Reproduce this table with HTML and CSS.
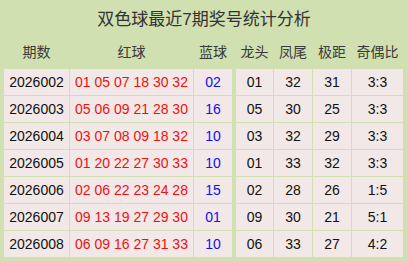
FILE: index.html
```html
<!DOCTYPE html>
<html lang="zh">
<head>
<meta charset="utf-8">
<title>双色球最近7期奖号统计分析</title>
<link rel="stylesheet" href="styles.css">
</head>
<body>
<div class="wrap">
  <div class="title">双色球最近7期奖号统计分析</div>
  <div class="grid head">
    <div>期数</div><div>红球</div><div>蓝球</div><div class="sep">龙头</div><div>凤尾</div><div>极距</div><div>奇偶比</div>
  </div>
  <div class="grid body">
    <div class="c">2026002</div><div class="c red">01 05 07 18 30 32</div><div class="c blue">02</div><div class="c sep">01</div><div class="c">32</div><div class="c">31</div><div class="c">3:3</div>
    <div class="c">2026003</div><div class="c red">05 06 09 21 28 30</div><div class="c blue">16</div><div class="c sep">05</div><div class="c">30</div><div class="c">25</div><div class="c">3:3</div>
    <div class="c">2026004</div><div class="c red">03 07 08 09 18 32</div><div class="c blue">10</div><div class="c sep">03</div><div class="c">32</div><div class="c">29</div><div class="c">3:3</div>
    <div class="c">2026005</div><div class="c red">01 20 22 27 30 33</div><div class="c blue">10</div><div class="c sep">01</div><div class="c">33</div><div class="c">32</div><div class="c">3:3</div>
    <div class="c">2026006</div><div class="c red">02 06 22 23 24 28</div><div class="c blue">15</div><div class="c sep">02</div><div class="c">28</div><div class="c">26</div><div class="c">1:5</div>
    <div class="c">2026007</div><div class="c red">09 13 19 27 29 30</div><div class="c blue">01</div><div class="c sep">09</div><div class="c">30</div><div class="c">21</div><div class="c">5:1</div>
    <div class="c">2026008</div><div class="c red">06 09 16 27 31 33</div><div class="c blue">10</div><div class="c sep">06</div><div class="c">33</div><div class="c">27</div><div class="c">4:2</div>
  </div>
</div>
</body>
</html>
```
FILE: styles.css
```css
html, body {
  margin: 0;
  padding: 0;
  background: #d0e0b1;
}
body {
  font-family: "Liberation Sans", "Noto Sans CJK SC", sans-serif;
  color: #111;
}
.wrap {
  width: 408px;
  height: 262px;
  padding: 0 4px;
  box-sizing: border-box;
}
.title {
  height: 40px;
  line-height: 40px;
  text-align: center;
  font-size: 17px;
  color: #333;
}
.grid {
  display: grid;
  grid-template-columns: 65px 123px 38px 40px 38px 38px 51px;
  column-gap: 1px;
  row-gap: 1px;
}
.head {
  height: 24px;
  line-height: 24px;
  margin-bottom: 5px;
  font-size: 14px;
  color: #3a3a3a;
  text-align: center;
}
.sep {
  margin-left: 3px;
}
.c {
  height: 26px;
  line-height: 26px;
  background: #f2e8e8;
  text-align: center;
  font-size: 14px;
}
.red {
  color: #f01010;
}
.blue {
  color: #1010f0;
}
```
